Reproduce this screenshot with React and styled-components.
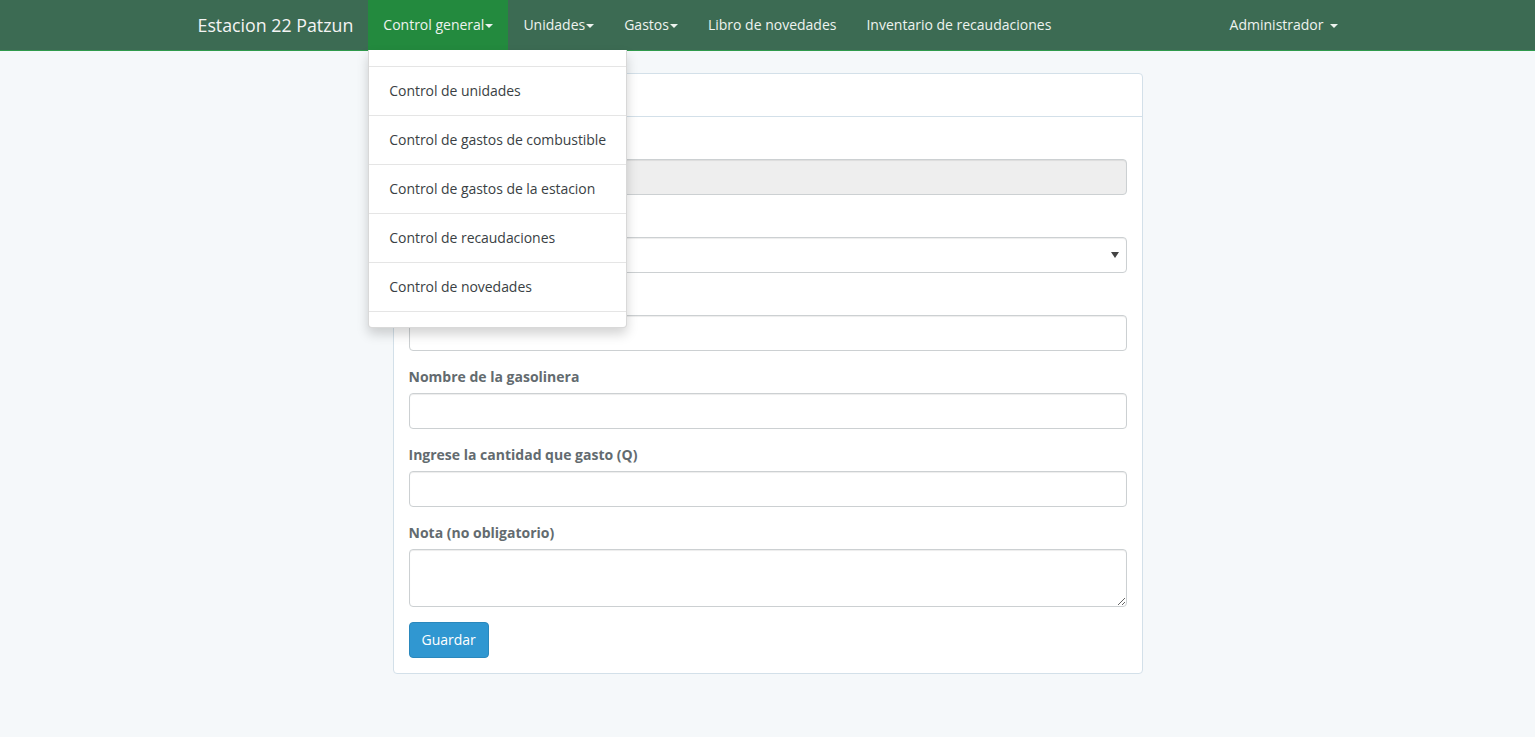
import React from 'react';
import styled, { createGlobalStyle } from 'styled-components';

const GlobalStyle = createGlobalStyle`
  * { box-sizing: border-box; }
  body {
    margin: 0;
    background: #f5f8fa;
    font-family: 'Open Sans', 'Liberation Sans', sans-serif;
    font-size: 14px;
    line-height: 1.6;
    color: #636b6f;
  }
`;

const Navbar = styled.nav`
  height: 51px;
  background: #3c6b53;
  border-bottom: 1px solid #2f9a4c;
  margin-bottom: 22px;
`;

const Container = styled.div`
  width: 1170px;
  margin: 0 auto;
  padding: 0 15px;
`;

const NavInner = styled(Container)`
  display: flex;
  height: 50px;
`;

const Brand = styled.a`
  margin-left: -15px;
  padding: 15px;
  font-size: 17.8px;
  line-height: 20px;
  color: #f4f4f4;
  white-space: nowrap;
`;

const NavList = styled.ul`
  display: flex;
  list-style: none;
  margin: 0;
  padding: 0;
  margin-left: ${p => (p.$right ? 'auto' : '0')};
  margin-right: ${p => (p.$right ? '-15px' : '0')};
`;

const NavItem = styled.li`
  position: relative;
`;

const NavLink = styled.a`
  display: block;
  padding: 15px;
  line-height: 20px;
  color: #eef3ef;
  white-space: nowrap;
  background: ${p => (p.$active ? '#238a3e' : 'transparent')};
`;

const Caret = styled.span`
  display: inline-block;
  width: 0;
  height: 0;
  margin-left: ${p => (p.$spaced ? '6px' : '1px')};
  vertical-align: middle;
  border-top: 4px solid currentColor;
  border-left: 4px solid transparent;
  border-right: 4px solid transparent;
`;

const Dropdown = styled.ul`
  position: absolute;
  top: 100%;
  left: 0;
  z-index: 10;
  list-style: none;
  margin: 0;
  padding: 16px 0 15px;
  background: #fff;
  border: 1px solid rgba(0, 0, 0, 0.15);
  border-top: 0;
  border-radius: 0 0 4px 4px;
  box-shadow: 0 6px 12px rgba(0, 0, 0, 0.175);
  min-width: 160px;
`;

const DropdownItem = styled.li`
  border-top: 1px solid #e5e5e5;
  &:last-child { border-bottom: 1px solid #e5e5e5; }
  a {
    display: block;
    padding: 13px 20px;
    line-height: 22px;
    color: #3a3f44;
    white-space: nowrap;
    letter-spacing: -0.05px;
  }
`;

const Row = styled.div`
  display: flex;
  margin: 0 -15px;
`;

const Col = styled.div`
  width: 66.6667%;
  margin-left: 16.6667%;
  padding: 0 15px;
`;

const Panel = styled.div`
  background: #fff;
  border: 1px solid #d3e0e9;
  border-radius: 4px;
`;

const PanelHeading = styled.div`
  padding: 10px 15px;
  height: 43px;
  border-bottom: 1px solid #d3e0e9;
  color: #333;
`;

const PanelBody = styled.form`
  padding: 15px;
`;

const FormGroup = styled.div`
  margin-bottom: 15px;
`;

const Label = styled.label`
  display: block;
  margin-bottom: 5px;
  font-weight: 700;
  line-height: 22px;
  color: #636b6f;
`;

const fieldCss = `
  display: block;
  width: 100%;
  height: 36px;
  padding: 6px 12px;
  font: inherit;
  color: #555;
  background-color: #fff;
  border: 1px solid #ccd0d2;
  border-radius: 4px;
  box-shadow: inset 0 1px 1px rgba(0, 0, 0, 0.075);
  outline: none;
`;

const Input = styled.input`
  ${fieldCss}
  &:disabled { background-color: #eeeeee; }
`;

const Select = styled.select`
  ${fieldCss}
  appearance: none;
  background-image: url("data:image/svg+xml,%3Csvg xmlns='http://www.w3.org/2000/svg' width='8' height='6'%3E%3Cpath d='M0 0h8L4 6z' fill='%23444'/%3E%3C/svg%3E");
  background-repeat: no-repeat;
  background-position: right 7px center;
`;

const TextArea = styled.textarea`
  ${fieldCss}
  height: 58px;
  resize: vertical;
`;

const Button = styled.button`
  height: 36px;
  padding: 6px 12px;
  font: inherit;
  line-height: 22px;
  color: #fff;
  background: #3097d1;
  border: 1px solid #2a88bd;
  border-radius: 4px;
`;

const menu = [
  'Control de unidades',
  'Control de gastos de combustible',
  'Control de gastos de la estacion',
  'Control de recaudaciones',
  'Control de novedades'
];

const App = () => (
  <>
    <GlobalStyle />
    <Navbar>
      <NavInner>
        <Brand>Estacion 22 Patzun</Brand>
        <NavList>
          <NavItem>
            <NavLink $active>
              Control general<Caret />
            </NavLink>
            <Dropdown>
              {menu.map(item => (
                <DropdownItem key={item}>
                  <a>{item}</a>
                </DropdownItem>
              ))}
            </Dropdown>
          </NavItem>
          <NavItem>
            <NavLink>
              Unidades<Caret />
            </NavLink>
          </NavItem>
          <NavItem>
            <NavLink>
              Gastos<Caret />
            </NavLink>
          </NavItem>
          <NavItem>
            <NavLink>Libro de novedades</NavLink>
          </NavItem>
          <NavItem>
            <NavLink>Inventario de recaudaciones</NavLink>
          </NavItem>
        </NavList>
        <NavList $right>
          <NavItem>
            <NavLink>
              Administrador<Caret $spaced />
            </NavLink>
          </NavItem>
        </NavList>
      </NavInner>
    </Navbar>

    <Container>
      <Row>
        <Col>
          <Panel>
            <PanelHeading>Gasto</PanelHeading>
            <PanelBody onSubmit={e => e.preventDefault()}>
              <FormGroup>
                <Label>Fecha</Label>
                <Input disabled />
              </FormGroup>
              <FormGroup>
                <Label>Unidad</Label>
                <Select defaultValue="">
                  <option value=""></option>
                </Select>
              </FormGroup>
              <FormGroup>
                <Label>Kilometraje</Label>
                <Input />
              </FormGroup>
              <FormGroup>
                <Label>Nombre de la gasolinera</Label>
                <Input />
              </FormGroup>
              <FormGroup>
                <Label>Ingrese la cantidad que gasto (Q)</Label>
                <Input />
              </FormGroup>
              <FormGroup>
                <Label>Nota (no obligatorio)</Label>
                <TextArea />
              </FormGroup>
              <Button type="submit">Guardar</Button>
            </PanelBody>
          </Panel>
        </Col>
      </Row>
    </Container>
  </>
);

export default App;
